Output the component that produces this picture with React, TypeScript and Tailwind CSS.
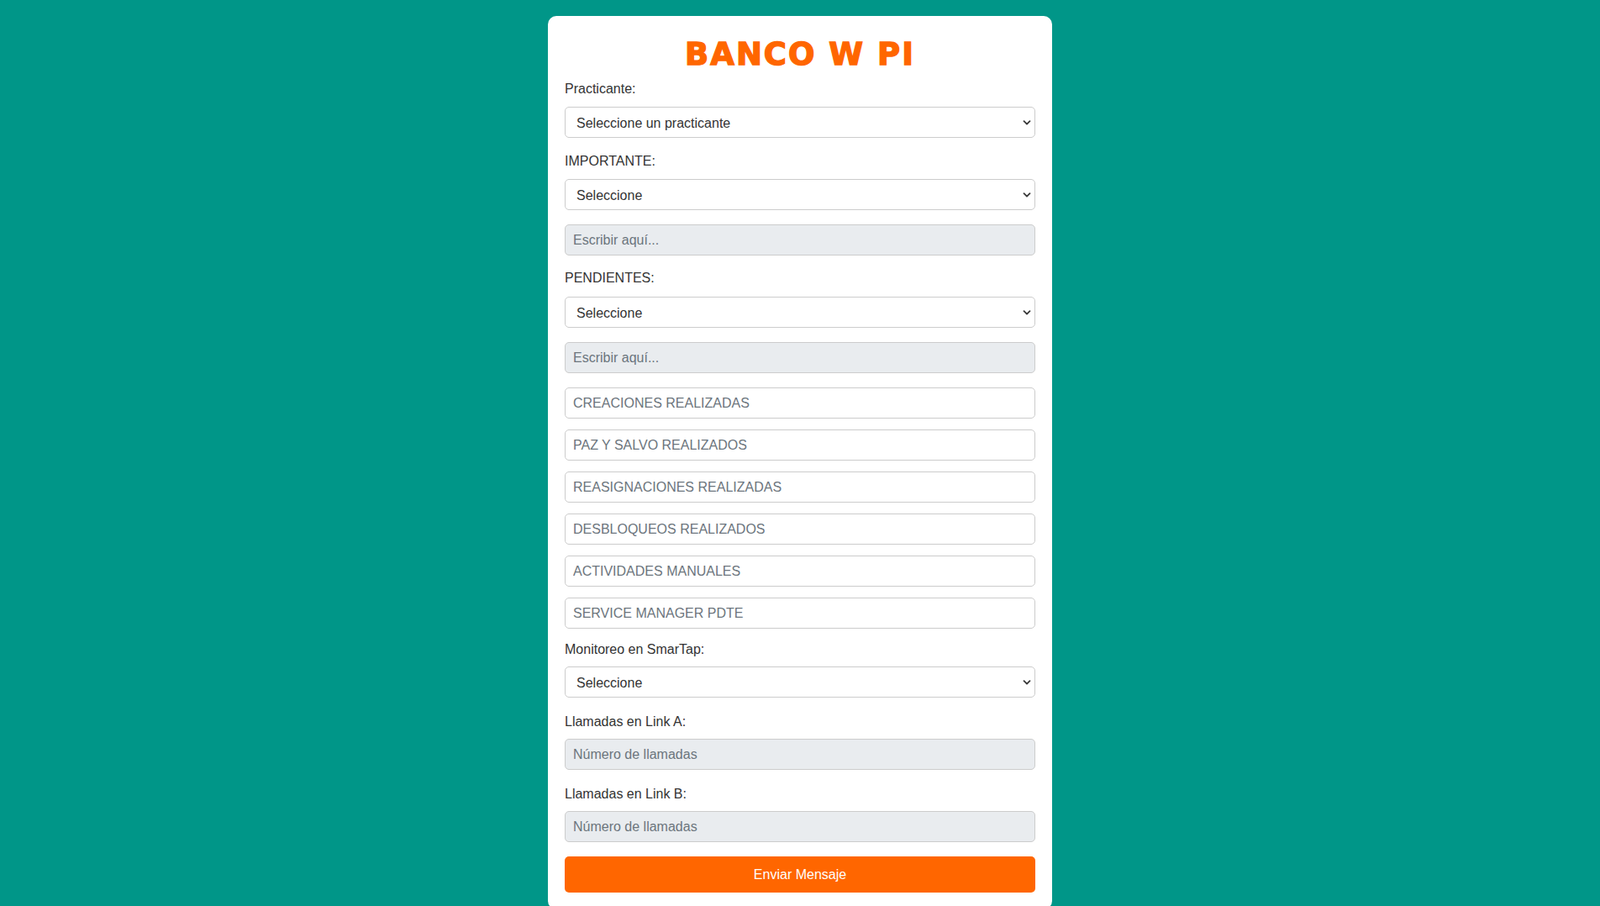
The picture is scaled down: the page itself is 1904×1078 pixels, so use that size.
import React, { useState } from 'react';

const fieldBase =
  'block w-full h-[37px] rounded-[5px] border border-[#cccccc] px-[9px] text-[16px] text-[#333333] placeholder:text-[#6c757d] focus:outline-none';

const Chevron = () => (
  <svg
    className="pointer-events-none absolute right-[5px] top-1/2 -translate-y-1/2"
    width="10"
    height="10"
    viewBox="0 0 10 10"
  >
    <path d="M1.5 3.2 L5 6.7 L8.5 3.2" fill="none" stroke="#3a3a3a" strokeWidth="1.9" strokeLinecap="round" strokeLinejoin="round" />
  </svg>
);

interface SelectProps {
  value: string;
  onChange: (v: string) => void;
  placeholder: string;
  options: string[];
  className?: string;
}

const SelectField: React.FC<SelectProps> = ({ value, onChange, placeholder, options, className }) => (
  <div className={`relative ${className || ''}`}>
    <select
      className={`${fieldBase} appearance-none bg-white pl-[13px] pt-[3px]`}
      value={value}
      onChange={(e) => onChange(e.target.value)}
    >
      <option value="">{placeholder}</option>
      {options.map((o) => (
        <option key={o} value={o}>{o}</option>
      ))}
    </select>
    <Chevron />
  </div>
);

const Label: React.FC<{ children: React.ReactNode; className?: string }> = ({ children, className }) => (
  <label className={`block text-[16px] leading-[18px] text-[#333333] ${className || ''}`}>{children}</label>
);

const counters = [
  'CREACIONES REALIZADAS',
  'PAZ Y SALVO REALIZADOS',
  'REASIGNACIONES REALIZADAS',
  'DESBLOQUEOS REALIZADOS',
  'ACTIVIDADES MANUALES',
  'SERVICE MANAGER PDTE',
];

export default function App() {
  const [form, setForm] = useState<Record<string, string>>({});
  const update = (key: string, value: string) => setForm((prev) => ({ ...prev, [key]: value }));

  return (
    <div
      className="min-h-screen bg-[#009688] flex justify-center pt-[19px]"
      style={{ fontFamily: '"Liberation Sans", Arial, sans-serif' }}
    >
      <div className="w-[600px] bg-white rounded-[10px] px-[20px] pt-[26px] pb-[20px] self-start">
        {/* no Arial Black offline: DejaVu bold + a thin stroke gets close */}
        <h1
          className="text-center text-[37px] leading-[40px] font-bold tracking-[2px] text-[#ff6600] [-webkit-text-stroke:1.4px_#ff6600]"
          style={{ fontFamily: '"Arial Black", "DejaVu Sans", sans-serif' }}
        >
          BANCO W PI
        </h1>

        <Label className="mt-[12px]">Practicante:</Label>
        <SelectField
          className="mt-[12px]"
          value={form.practicante || ''}
          onChange={(v) => update('practicante', v)}
          placeholder="Seleccione un practicante"
          options={['Practicante 1', 'Practicante 2']}
        />

        <Label className="mt-[19px]">IMPORTANTE:</Label>
        <SelectField
          className="mt-[12px]"
          value={form.importante || ''}
          onChange={(v) => update('importante', v)}
          placeholder="Seleccione"
          options={['Sí', 'No']}
        />
        <input
          type="text"
          placeholder="Escribir aquí..."
          className={`${fieldBase} mt-[17px] bg-[#e9ecef]`}
          value={form.importanteTxt || ''}
          onChange={(e) => update('importanteTxt', e.target.value)}
        />

        <Label className="mt-[18px]">PENDIENTES:</Label>
        <SelectField
          className="mt-[13px]"
          value={form.pendientes || ''}
          onChange={(v) => update('pendientes', v)}
          placeholder="Seleccione"
          options={['Sí', 'No']}
        />
        <input
          type="text"
          placeholder="Escribir aquí..."
          className={`${fieldBase} mt-[17px] bg-[#e9ecef]`}
          value={form.pendientesTxt || ''}
          onChange={(e) => update('pendientesTxt', e.target.value)}
        />

        {counters.map((c, i) => (
          <input
            key={c}
            type="text"
            placeholder={c}
            className={`${fieldBase} bg-white ${i === 0 ? 'mt-[17px]' : 'mt-[13px]'}`}
            value={form[c] || ''}
            onChange={(e) => update(c, e.target.value)}
          />
        ))}

        <Label className="mt-[16px]">Monitoreo en SmarTap:</Label>
        <SelectField
          className="mt-[11px]"
          value={form.smartap || ''}
          onChange={(v) => update('smartap', v)}
          placeholder="Seleccione"
          options={['Sí', 'No']}
        />

        <Label className="mt-[20px]">Llamadas en Link A:</Label>
        <input
          type="number"
          placeholder="Número de llamadas"
          className={`${fieldBase} mt-[11px] bg-[#e9ecef]`}
          value={form.linkA || ''}
          onChange={(e) => update('linkA', e.target.value)}
        />

        <Label className="mt-[20px]">Llamadas en Link B:</Label>
        <input
          type="number"
          placeholder="Número de llamadas"
          className={`${fieldBase} mt-[11px] bg-[#e9ecef]`}
          value={form.linkB || ''}
          onChange={(e) => update('linkB', e.target.value)}
        />

        <button className="mt-[17px] w-full h-[43px] rounded-[5px] bg-[#ff6600] text-white text-[16px]">
          Enviar Mensaje
        </button>
      </div>
    </div>
  );
}
